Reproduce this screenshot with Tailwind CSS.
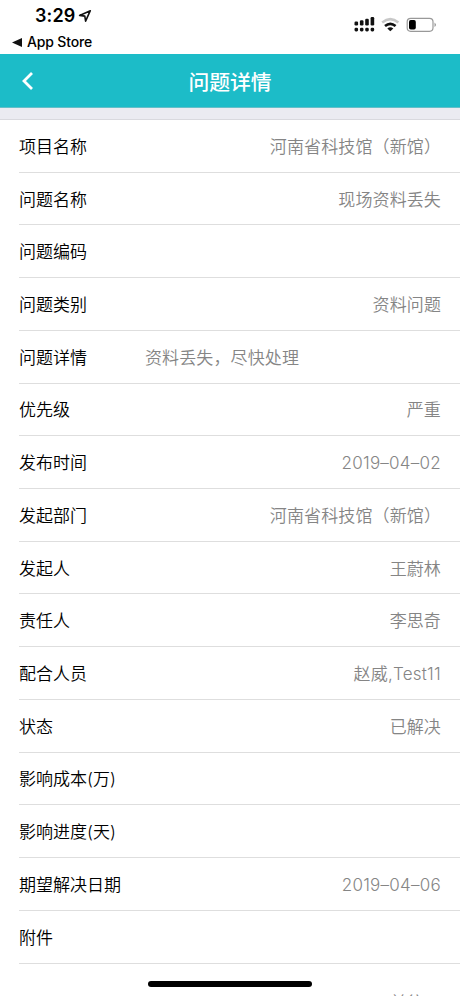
<!DOCTYPE html>
<html lang="zh-CN">
<head>
<meta charset="utf-8">
<meta name="viewport" content="width=device-width, initial-scale=1">
<title>问题详情</title>
<script src="https://cdn.jsdelivr.net/npm/@tailwindcss/browser@4"></script>
</head>
<body class="relative flex h-[996px] w-[460px] flex-col overflow-hidden bg-white font-['Inter','Noto_Sans_CJK_SC',sans-serif] text-[17px] text-black">
<header class="flex h-[54px] shrink-0 justify-between">
  <div class="flex flex-col pl-3">
    <div class="flex h-[32px] items-center gap-[3px] pl-[23px]">
      <span class="text-[18px] font-semibold leading-none tracking-[0.1px]">3:29</span>
      <svg class="size-[14px]" viewBox="0 0 14 14" fill="none" stroke="#111" stroke-width="1.6" stroke-linejoin="round"><path d="M12.3 1.7 1.6 6.4 6.8 7.1 7.6 12.2Z"/></svg>
    </div>
    <div class="flex h-[20px] items-center gap-[5px]">
      <svg class="h-[9px] w-[10px]" viewBox="0 0 10 9"><path d="M0 4.5 10 0V9Z" fill="#111"/></svg>
      <span class="text-[14px] font-medium leading-none tracking-[-0.15px]">App Store</span>
    </div>
  </div>
  <svg class="mt-[10px] mr-[20px] h-[28px] w-[95px]" viewBox="345 10 95 28">
    <g fill="#111">
      <rect x="354.5" y="21.5" width="3.6" height="4" rx="1.2"/><rect x="359.9" y="20.3" width="3.6" height="5.2" rx="1.2"/><rect x="365.2" y="18.8" width="3.6" height="6.7" rx="1.2"/><rect x="370.6" y="17" width="3.6" height="8.5" rx="1.2"/>
      <rect x="354.5" y="27.8" width="3.6" height="3.6" rx="1.4"/><rect x="359.9" y="27.8" width="3.6" height="3.6" rx="1.4"/><rect x="365.2" y="27.8" width="3.6" height="3.6" rx="1.4"/><rect x="370.6" y="27.8" width="3.6" height="3.6" rx="1.4"/>
      <path d="M390.3 31.3 387.3 28.4Q390.3 26.2 393.3 28.4Z"/>
    </g>
    <path d="M382.2 22.5Q390.3 15.7 398.4 22.5" fill="none" stroke="#c8c8c8" stroke-width="2.5"/>
    <path d="M385 26Q390.3 21.6 395.6 26" fill="none" stroke="#111" stroke-width="2.6"/>
    <rect x="407.2" y="18.3" width="25.8" height="13" rx="3.5" fill="none" stroke="#999" stroke-width="1.2"/>
    <rect x="409" y="20.1" width="6.8" height="9.4" rx="1.8" fill="#000"/>
    <path d="M434.5 22.5Q437.5 24.8 434.5 27Z" fill="#999"/>
  </svg>
</header>
<nav class="grid h-[54px] shrink-0 grid-cols-[60px_1fr_60px] items-center border-b border-[#65bfc8] bg-[#1cbcc8] text-white">
  <svg class="ml-[21px] h-[20px] w-[13px]" viewBox="0 0 13 20" fill="none" stroke="white" stroke-width="2.8"><path d="M11 2 3 10 11 18"/></svg>
  <h1 class="pt-[5px] text-center text-[20.8px] font-medium leading-none">问题详情</h1>
</nav>
<div class="h-[12px] shrink-0 border-b border-[#d9d9de] bg-[#ebebf1]"></div>
<main class="flex flex-col pl-[19px] font-[350] *:flex *:h-[52.72px] *:shrink-0 *:items-center *:justify-between *:border-b *:border-[#dedede] *:pt-[3px] *:pr-[19px] *:leading-none">
  <div><span>项目名称</span><span class="tracking-[0.12px] text-[#858585]">河南省科技馆（新馆）</span></div>
  <div><span>问题名称</span><span class="tracking-[0.12px] text-[#858585]">现场资料丢失</span></div>
  <div><span>问题编码</span></div>
  <div><span>问题类别</span><span class="tracking-[0.12px] text-[#858585]">资料问题</span></div>
  <div><span class="w-[126px]">问题详情</span><span class="flex-1 tracking-[0.12px] text-[#858585]">资料丢失，尽快处理</span></div>
  <div><span>优先级</span><span class="tracking-[0.12px] text-[#858585]">严重</span></div>
  <div><span>发布时间</span><span class="tracking-[0.25px] text-[#858585]">2019–04–02</span></div>
  <div><span>发起部门</span><span class="tracking-[0.12px] text-[#858585]">河南省科技馆（新馆）</span></div>
  <div><span>发起人</span><span class="tracking-[0.12px] text-[#858585]">王蔚林</span></div>
  <div><span>责任人</span><span class="tracking-[0.12px] text-[#858585]">李思奇</span></div>
  <div><span>配合人员</span><span class="tracking-[0.25px] text-[#858585]">赵威,Test11</span></div>
  <div><span>状态</span><span class="tracking-[0.12px] text-[#858585]">已解决</span></div>
  <div><span>影响成本(万)</span></div>
  <div><span>影响进度(天)</span></div>
  <div><span>期望解决日期</span><span class="tracking-[0.25px] text-[#858585]">2019–04–06</span></div>
  <div><span>附件</span></div>
</main>
<div class="flex shrink-0 justify-end pt-[29px] pr-[36px] font-[350] leading-[20px] text-[#858585]"><span>前往</span></div>
<div class="absolute bottom-[9px] left-[148px] h-[6px] w-[164px] rounded-full bg-black"></div>
</body>
</html>
